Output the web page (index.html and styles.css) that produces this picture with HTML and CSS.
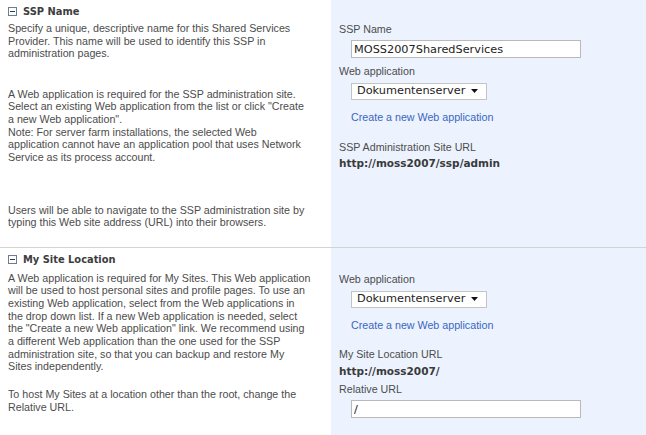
FILE: index.html
```html
<!DOCTYPE html>
<html lang="en">
<head>
  <meta charset="UTF-8" />
  <title>New Shared Services Provider</title>
  <link rel="stylesheet" href="styles.css">
</head>
<body>
  <div class="form">

    <!-- SSP Name -->
    <div class="section">
      <div class="desc">
        <h3 class="section-title">
          <svg class="toggle" width="9" height="9" viewBox="0 0 9 9">
            <rect x="0.5" y="0.5" width="8" height="8" fill="#fff" stroke="#6d7c92"/>
            <rect x="2" y="4" width="5" height="1" fill="#2f3b4e"/>
          </svg>
          SSP Name
        </h3>
        <p>Specify a unique, descriptive name for this Shared Services<br>Provider. This name will be used to identify this SSP in<br>administration pages.</p>
        <p class="gap-webapp">A Web application is required for the SSP administration site.<br>Select an existing Web application from the list or click "Create<br>a new Web application".<br>Note: For server farm installations, the selected Web<br>application cannot have an application pool that uses Network<br>Service as its process account.</p>
        <p class="gap-url">Users will be able to navigate to the SSP administration site by<br>typing this Web site address (URL) into their browsers.</p>
      </div>
      <div class="controls">
        <div class="label">SSP Name</div>
        <input class="text-input" type="text" value="MOSS2007SharedServices">
        <div class="label">Web application</div>
        <div class="dropdown">
          <span>Dokumentenserver</span>
          <svg width="7" height="4" viewBox="0 0 7 4"><polygon points="0,0 7,0 3.5,4" fill="#111"/></svg>
        </div>
        <a class="link" href="#">Create a new Web application</a>
        <div class="label after-link">SSP Administration Site URL</div>
        <div class="url">http://moss2007/ssp/admin</div>
      </div>
    </div>

    <!-- My Site Location -->
    <div class="section last">
      <div class="desc">
        <h3 class="section-title">
          <svg class="toggle" width="9" height="9" viewBox="0 0 9 9">
            <rect x="0.5" y="0.5" width="8" height="8" fill="#fff" stroke="#6d7c92"/>
            <rect x="2" y="4" width="5" height="1" fill="#2f3b4e"/>
          </svg>
          My Site Location
        </h3>
        <p>A Web application is required for My Sites. This Web application<br>will be used to host personal sites and profile pages. To use an<br>existing Web application, select from the Web applications in<br>the drop down list. If a new Web application is needed, select<br>the "Create a new Web application" link. We recommend using<br>a different Web application than the one used for the SSP<br>administration site, so that you can backup and restore My<br>Sites independently.</p>
        <p class="gap-line">To host My Sites at a location other than the root, change the<br>Relative URL.</p>
      </div>
      <div class="controls">
        <div class="label">Web application</div>
        <div class="dropdown">
          <span>Dokumentenserver</span>
          <svg width="7" height="4" viewBox="0 0 7 4"><polygon points="0,0 7,0 3.5,4" fill="#111"/></svg>
        </div>
        <a class="link" href="#">Create a new Web application</a>
        <div class="label after-link">My Site Location URL</div>
        <div class="url">http://moss2007/</div>
        <div class="label">Relative URL</div>
        <input class="text-input" type="text" value="/">
      </div>
    </div>

  </div>
</body>
</html>
```

FILE: styles.css
```css
body {
  margin: 0;
  font-family: "Liberation Sans", Arial, sans-serif;
  font-size: 10.7px;
  line-height: 12.7px;
  color: #4c4c4c;
  background: #fff;
}

.section {
  display: grid;
  grid-template-columns: 331px 1fr;
}

.section + .section {
  border-top: 1px solid #d3d3d3;
}

.desc {
  padding: 5px 8px 18px 8px;
}

.section.last .desc,
.section.last .controls {
  padding-bottom: 20px;
}

.section-title {
  display: flex;
  align-items: center;
  gap: 6px;
  margin: 0 0 4px;
  font-family: "DejaVu Sans", Verdana, sans-serif;
  font-size: 9.9px;
  font-weight: bold;
  line-height: 13px;
  color: #3d3d3d;
}

.section.last .section-title {
  margin-bottom: 5.5px;
}

.toggle {
  flex: none;
}

.desc p {
  margin: 0;
  white-space: nowrap;
}

.desc .gap-webapp {
  margin-top: 27.5px;
}

.desc .gap-url {
  margin-top: 39.8px;
}

.desc .gap-line {
  margin-top: 15px;
}

.controls {
  background: #ecf3fe;
  padding: 23px 8px 0 8px;
  display: flex;
  flex-direction: column;
  align-items: flex-start;
}

.section.last .controls {
  padding-top: 25px;
}

.label {
  margin-top: 7px;
}

.label:first-child {
  margin-top: 0;
}

.label.after-link {
  margin-top: 17px;
}

.url + .label {
  margin-top: 5px;
}

.text-input {
  box-sizing: border-box;
  width: 230px;
  height: 18px;
  margin: 4.5px 0 0 12px;
  padding: 0 2px;
  border: 1px solid #b9b9b9;
  background: #fff;
  font-family: "DejaVu Sans", Verdana, sans-serif;
  font-size: 11.3px;
  color: #222;
  outline: none;
}

.dropdown {
  box-sizing: border-box;
  width: 136px;
  height: 17px;
  margin: 5px 0 0 12px;
  padding: 0 8px 0 5px;
  border: 1px solid #c4c4c4;
  background: #fff;
  display: flex;
  align-items: center;
  justify-content: space-between;
  font-family: "DejaVu Sans", Verdana, sans-serif;
  font-size: 11.3px;
  color: #222;
}

.link {
  margin: 11px 0 0 12px;
  color: #3966bf;
  text-decoration: none;
}

.url {
  margin-top: 4px;
  font-family: "DejaVu Sans", Verdana, sans-serif;
  font-size: 10.5px;
  font-weight: bold;
  color: #3a3a3a;
}
```
